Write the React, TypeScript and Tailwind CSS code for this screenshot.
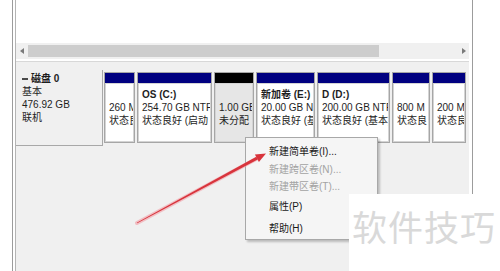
const parts = [
  { w: "w-[31px]", head: "bg-[#000080]", body: "bg-white", name: "", size: "260 MB", status: "状态良" },
  { w: "w-[75px]", head: "bg-[#000080]", body: "bg-white", name: "OS  (C:)", size: "254.70 GB NTF", status: "状态良好 (启动" },
  { w: "w-[40px]", head: "bg-black", body: "bg-[#e6e6e6]", name: "", size: "1.00 GB", status: "未分配" },
  { w: "w-[59px]", head: "bg-[#000080]", body: "bg-white", name: "新加卷  (E:)", size: "20.00 GB N", status: "状态良好 (基" },
  { w: "w-[73px]", head: "bg-[#000080]", body: "bg-white", name: "D  (D:)", size: "200.00 GB NTF", status: "状态良好 (基本)" },
  { w: "w-[38px]", head: "bg-[#000080]", body: "bg-white", name: "", size: "800 M", status: "状态良" },
  { w: "w-[34px]", head: "bg-[#000080]", body: "bg-white", name: "", size: "200 M", status: "状态良" },
];

const menu = [
  { label: "新建简单卷(I)...", h: "h-[18px]", on: true },
  { label: "新建跨区卷(N)...", h: "h-[18px]", on: false },
  { label: "新建带区卷(T)...", h: "h-[17px]", on: false },
  { label: "属性(P)", h: "h-[22px]", on: true },
  { label: "帮助(H)", h: "h-[22px]", on: true },
];

function Partition({ p }: { p: (typeof parts)[number] }) {
  return (
    <div className={`${p.w} flex h-full shrink-0 flex-col border border-[#a6a6a6]`}>
      <div className={`h-[10px] shrink-0 ${p.head}`} />
      <div
        className={`flex-1 overflow-hidden whitespace-nowrap border border-[#d4d4d4] pl-[3px] pt-[4px] text-[10px] leading-[13px] text-[#1e1e1e] ${p.body}`}
      >
        <div className="h-[13px] font-bold">{p.name}</div>
        <div>{p.size}</div>
        <div>{p.status}</div>
      </div>
    </div>
  );
}

export default function App() {
  return (
    <div className="relative flex h-[271px] w-[500px] overflow-hidden bg-white font-['Liberation_Sans','Noto_Sans_CJK_SC',sans-serif]">
      <div className="w-[12px] shrink-0" />
      <div className="flex h-full w-[461px] shrink-0 border-l border-r border-[#9c9c9c] bg-white pl-[2px] pr-[3px]">
        <div className="flex h-full flex-1 flex-col border-l border-[#b4b4b4]">
          {/* list view area */}
          <div className="h-[43px] shrink-0 bg-white" />
          {/* horizontal scrollbar */}
          <div className="flex h-[16px] shrink-0 items-center bg-[#f0f0f0]">
            <div className="flex w-[12px] justify-center">
              <svg width="5" height="6" viewBox="0 0 5 6">
                <path d="M4 0 L0 3 L4 6 Z" fill="#7a7a7a" />
              </svg>
            </div>
            <div className="h-[12px] w-[351px] bg-[#cdcdcd]" />
            <div className="flex-1" />
            <div className="flex w-[12px] justify-center">
              <svg width="5" height="6" viewBox="0 0 5 6">
                <path d="M1 0 L5 3 L1 6 Z" fill="#7a7a7a" />
              </svg>
            </div>
          </div>
          <div className="h-[3px] shrink-0 border-b border-[#d8d8d8] bg-white" />
          {/* disk pane */}
          <div className="flex-1 bg-[#f0f0f0] pt-[8px]">
            <div className="flex items-start">
              <div className="h-[76px] w-[87px] shrink-0 border-r border-b border-[#a8a8a8] pl-[6px] pt-[2px] text-[10px] leading-[13px] text-[#1e1e1e]">
                <div className="flex items-center gap-[3px]">
                  <span className="h-[2px] w-[6px] bg-[#4a4a4a]" />
                  <span className="font-bold">磁盘 0</span>
                </div>
                <div>基本</div>
                <div>476.92 GB</div>
                <div>联机</div>
              </div>
              <div className="mt-[2px] flex h-[71px] gap-[2px] pl-[1px]">
                {parts.map((p, i) => (
                  <Partition key={i} p={p} />
                ))}
              </div>
            </div>
          </div>
        </div>
      </div>
      <div className="flex-1 bg-white" />

      {/* context menu */}
      <div className="absolute left-[245px] top-[137px] w-[133px] border border-[#a8a8a8] bg-[#f5f5f5] pt-[4px] shadow-[2px_2px_2px_rgba(0,0,0,0.22)]">
        {menu.map((m) => (
          <div
            key={m.label}
            className={`${m.h} flex items-center pl-[23px] text-[10px] ${m.on ? "text-[#1a1a1a]" : "text-[#a3a3a3]"}`}
          >
            {m.label}
          </div>
        ))}
      </div>

      {/* red arrow annotation */}
      <svg className="pointer-events-none absolute left-0 top-0" width="500" height="271">
        <line x1="137" y1="223" x2="258" y2="158" stroke="#f2a0a8" strokeWidth="4" strokeLinecap="round" opacity="0.6" />
        <polygon points="137.2,223.3 136.8,222.7 256.3,156.8 257.7,159.6" fill="#d8343c" />
        <polygon points="266,153.5 258.9,162 254.9,154.6" fill="#d8343c" />
      </svg>

      {/* watermark */}
      <div className="absolute left-[349px] top-[194px] flex h-[77px] w-[151px] items-start bg-white pl-[3px] pt-[12px]">
        <span className="text-[35px] leading-[40px] tracking-[1px] text-[#d9d9d9] font-['Noto_Sans_CJK_SC',sans-serif]">
          软件技巧
        </span>
      </div>
    </div>
  );
}
